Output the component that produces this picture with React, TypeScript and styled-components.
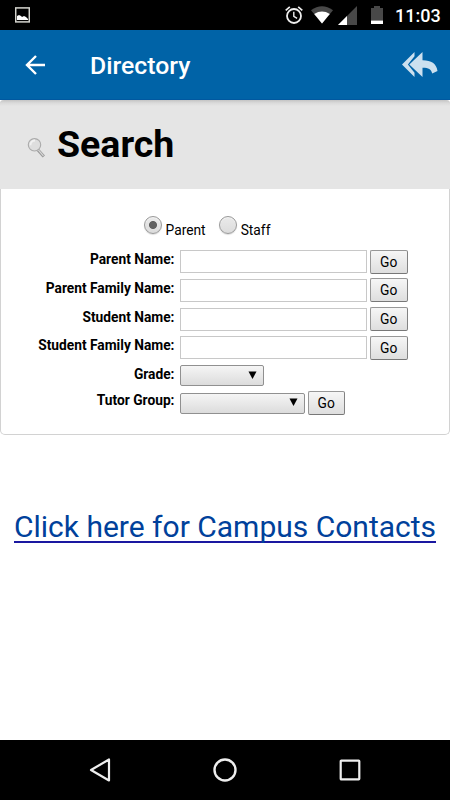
import React, { useState } from "react";
import styled, { createGlobalStyle } from "styled-components";

const GlobalStyle = createGlobalStyle`
  * { box-sizing: border-box; }
  body { margin: 0; background: #fff; font-family: Roboto, sans-serif; color: #000; }
`;

const Screen = styled.div`
  width: 450px;
  height: 800px;
  display: flex;
  flex-direction: column;
  overflow: hidden;
  background: #fff;
`;

const StatusBar = styled.div`
  flex: none;
  height: 30px;
  background: #000;
  display: flex;
  align-items: center;
  justify-content: space-between;
  padding: 0 10px 0 15px;
`;

const StatusIcons = styled.div`
  display: flex;
  align-items: center;
`;

const Gap = styled.span<{ $w: number }>`
  width: ${(p) => p.$w}px;
`;

const Clock = styled.span`
  width: 45px;
  margin-left: 12px;
  color: #fff;
  font-size: 18px;
  font-weight: 500;
  line-height: 30px;
  padding-top: 1px;
  white-space: nowrap;
`;

const AppBar = styled.header`
  flex: none;
  height: 70px;
  background: #0063a7;
  border-bottom: 1px solid #0058a0;
  display: flex;
  align-items: center;
  padding: 0 12px 0 25px;
`;

const Title = styled.h1`
  flex: 1;
  margin: 2px 0 0 45px;
  font-size: 24.8px;
  font-weight: 500;
  line-height: 30px;
  color: #fff;
`;

const IconButton = styled.button`
  display: flex;
  padding: 0;
  border: 0;
  background: none;
`;

const Content = styled.main`
  flex: 1;
`;

const Card = styled.section`
  height: 335px;
  border: 1px solid #d2d2d2;
  border-top: 0;
  border-radius: 4px 4px 5px 5px;
`;

const CardHeader = styled.div`
  height: 89px;
  margin: 0 -1px;
  display: flex;
  align-items: center;
  padding-left: 27px;
  border-radius: 4px 4px 0 0;
  background: linear-gradient(#c4c4c4, #dadada 3px, #e5e5e5 6px);
`;

const Heading = styled.h2`
  margin: 0 0 1px 11px;
  font-size: 37.5px;
  line-height: 46px;
  font-weight: 700;
`;

const RadioRow = styled.div`
  height: 61px;
  padding: 27px 0 0 142.5px;
  display: flex;
  align-items: flex-start;
`;

const RadioLabel = styled.label`
  display: flex;
  align-items: flex-start;
  margin-right: 13px;
  font-size: 13.8px;
  line-height: 18px;
`;

const RadioText = styled.span`
  margin: 5px 0 0 4px;
`;

const Radio = styled.input`
  appearance: none;
  flex: none;
  width: 18px;
  height: 18px;
  margin: 0;
  border: 1px solid #999;
  border-radius: 50%;
  background: linear-gradient(#eaeaea, #dcdcdc);
  box-shadow: inset 0 1px 1px #fff8, 0 1px 1px #0002;
  &:checked {
    background: radial-gradient(circle, #606060 3.6px, transparent 4.4px),
      linear-gradient(#eaeaea, #dcdcdc);
  }
`;

const FieldRow = styled.div<{ $height: number }>`
  height: ${(p) => p.$height}px;
  display: flex;
  align-items: flex-start;
`;

const FieldLabel = styled.label<{ $raised?: boolean }>`
  width: 173.5px;
  margin: ${(p) => (p.$raised ? "-1.5px" : "0")} 5.5px 0 0;
  text-align: right;
  font-size: 13.75px;
  font-weight: 700;
  line-height: 18px;
  white-space: nowrap;
`;

const TextInput = styled.input`
  width: 187px;
  height: 23px;
  margin: 0;
  padding: 0 4px;
  border: 1px solid #c8c8c8;
  border-radius: 0;
  font: 14px Roboto, sans-serif;
`;

const GoButton = styled.button<{ $raised?: boolean }>`
  width: 37.5px;
  height: 24px;
  margin: ${(p) => (p.$raised ? "-1.5px 0 0 2.5px" : "-0.3px 0 0 3px")};
  padding: 0;
  border: 1px solid #979797;
  border-right-color: #828282;
  border-bottom-color: #777;
  border-radius: 2px;
  background: linear-gradient(#f6f6f6, #dedede);
  font: 13.8px/20px Roboto, sans-serif;
  color: #000;
`;

const Picker = styled.button<{ $width: number }>`
  width: ${(p) => p.$width}px;
  height: 21px;
  padding: 0 6px 2px 0;
  display: flex;
  align-items: center;
  justify-content: flex-end;
  border: 1px solid #909090;
  border-radius: 2px;
  background: linear-gradient(#f5f5f5, #dcdcdc);
`;

const ContactsLink = styled.a`
  display: flex;
  justify-content: center;
  width: 422px;
  margin: 75px auto 0;
  height: 33px;
  font-size: 30px;
  line-height: 34px;
  white-space: nowrap;
  color: #00419b;
  text-decoration: none;
  border-bottom: 2px solid #1a18a0;
`;

const NavBar = styled.nav`
  flex: none;
  height: 60px;
  background: #000;
  display: flex;
  align-items: center;
  justify-content: space-between;
  padding: 0 88px;
`;

const ImageIcon = () => (
  <svg width="15" height="16" viewBox="0 0 15 16">
    <rect x=".7" y=".9" width="13.6" height="14" fill="none" stroke="#d4d4ce" strokeWidth="1.5" />
    <path d="M2 13V9l2-1 2 1 1 1 2-1 2 1 2 2v1z" fill="#fff" />
  </svg>
);

const AlarmIcon = () => (
  <svg width="18" height="20" viewBox="0 0 18 20" fill="none" stroke="#eee">
    <circle cx="9" cy="11" r="7" strokeWidth="1.8" />
    <path d="M.7 5.3 4.8 1.8M17.3 5.3l-4.1-3.5" strokeWidth="1.7" />
    <path d="M8.8 6.8v4.5l3.3 2" strokeWidth="1.4" />
  </svg>
);

const WifiIcon = () => (
  <svg width="22" height="18" viewBox="0 0 22 18">
    <path d="M0 4.2Q11-3.5 22 4.2L11 17.5z" fill="#484848" />
    <path d="M3.2 8Q11 3.2 18.8 8L11 17.5z" fill="#fff" />
  </svg>
);

const SignalIcon = () => (
  <svg width="19" height="19" viewBox="0 0 19 19">
    <path d="M19 0v19H0z" fill="#484848" />
    <path d="M9 10v9H0z" fill="#fff" />
  </svg>
);

const BatteryIcon = () => (
  <svg width="12" height="18" viewBox="0 0 12 18">
    <path d="M0 2h3V0h6v2h3v12.5H0z" fill="#484848" />
    <path d="M0 14.5h12V18H0z" fill="#fff" />
  </svg>
);

const BackArrow = () => (
  <svg width="20" height="20" viewBox="0 0 20 20" fill="none" stroke="#fff" strokeWidth="2.4">
    <path d="M11 1 2 10l9 9M2 10h18" />
  </svg>
);

const ReplyAll = () => (
  <svg width="36" height="25" viewBox="0 0 36 25" fill="#cce0ef">
    <path d="M12.5 0v4.2L5.9 12.5l6.6 8.2V25L0 12.5z" />
    <path d="M20.5 0v8.3C29 8.2 34.5 11.5 35.5 19l-5.3 2.5c-1-4.3-4-5.8-9.7-5.7V25L7.3 12.5z" />
  </svg>
);

const MagnifierSvg = styled.svg`
  margin-top: 6px;
`;

const Magnifier = () => (
  <MagnifierSvg width="19" height="21" viewBox="0 0 19 21">
    <path d="m11 13 5.8 6.6" stroke="#999" strokeWidth="3" />
    <path d="m11.3 12.8 5.1 6" stroke="#d8d8d8" strokeWidth="1.2" />
    <circle cx="7.5" cy="7.8" r="6.2" fill="#dedede" stroke="#aaa" strokeWidth="1.1" />
    <path d="M3.5 8.2c0-3 2-4.7 4.5-4.7" fill="none" stroke="#f1f1f1" strokeWidth="1.8" />
  </MagnifierSvg>
);

const Caret = () => (
  <svg width="9" height="8" viewBox="0 0 9 8">
    <path d="M.5.5h8L4.5 8z" />
  </svg>
);

const textFields = ["Parent Name:", "Parent Family Name:", "Student Name:", "Student Family Name:"];

export default function App() {
  const [role, setRole] = useState("Parent");
  return (
    <Screen>
      <GlobalStyle />
      <StatusBar>
        <ImageIcon />
        <StatusIcons>
          <AlarmIcon />
          <Gap $w={8} />
          <WifiIcon />
          <Gap $w={5} />
          <SignalIcon />
          <Gap $w={14} />
          <BatteryIcon />
          <Clock>11:03</Clock>
        </StatusIcons>
      </StatusBar>
      <AppBar>
        <IconButton aria-label="Back"><BackArrow /></IconButton>
        <Title>Directory</Title>
        <IconButton aria-label="Reply all"><ReplyAll /></IconButton>
      </AppBar>
      <Content>
        <Card>
          <CardHeader>
            <Magnifier />
            <Heading>Search</Heading>
          </CardHeader>
          <RadioRow>
            {["Parent", "Staff"].map((name) => (
              <RadioLabel key={name}>
                <Radio type="radio" name="role" checked={role === name} onChange={() => setRole(name)} />
                <RadioText>{name}</RadioText>
              </RadioLabel>
            ))}
          </RadioRow>
          {textFields.map((name) => (
            <FieldRow key={name} $height={28.75}>
              <FieldLabel>{name}</FieldLabel>
              <TextInput aria-label={name} />
              <GoButton>Go</GoButton>
            </FieldRow>
          ))}
          <FieldRow $height={27.5}>
            <FieldLabel>Grade:</FieldLabel>
            <Picker $width={84} aria-label="Grade"><Caret /></Picker>
          </FieldRow>
          <FieldRow $height={24}>
            <FieldLabel $raised>Tutor Group:</FieldLabel>
            <Picker $width={125} aria-label="Tutor Group"><Caret /></Picker>
            <GoButton $raised>Go</GoButton>
          </FieldRow>
        </Card>
        <ContactsLink href="#">Click here for Campus Contacts</ContactsLink>
      </Content>
      <NavBar>
        <svg width="24" height="26" viewBox="0 0 24 26" fill="none" stroke="#eee" strokeWidth="2.2" strokeLinejoin="round">
          <path d="M21 2.5v21L3 13z" />
        </svg>
        <svg width="26" height="26" viewBox="0 0 26 26" fill="none" stroke="#eee" strokeWidth="2.4">
          <circle cx="13" cy="13" r="10.5" />
        </svg>
        <svg width="24" height="24" viewBox="0 0 24 24" fill="none" stroke="#eee" strokeWidth="2.2">
          <rect x="2.7" y="2.7" width="18.6" height="18.6" rx=".6" />
        </svg>
      </NavBar>
    </Screen>
  );
}
